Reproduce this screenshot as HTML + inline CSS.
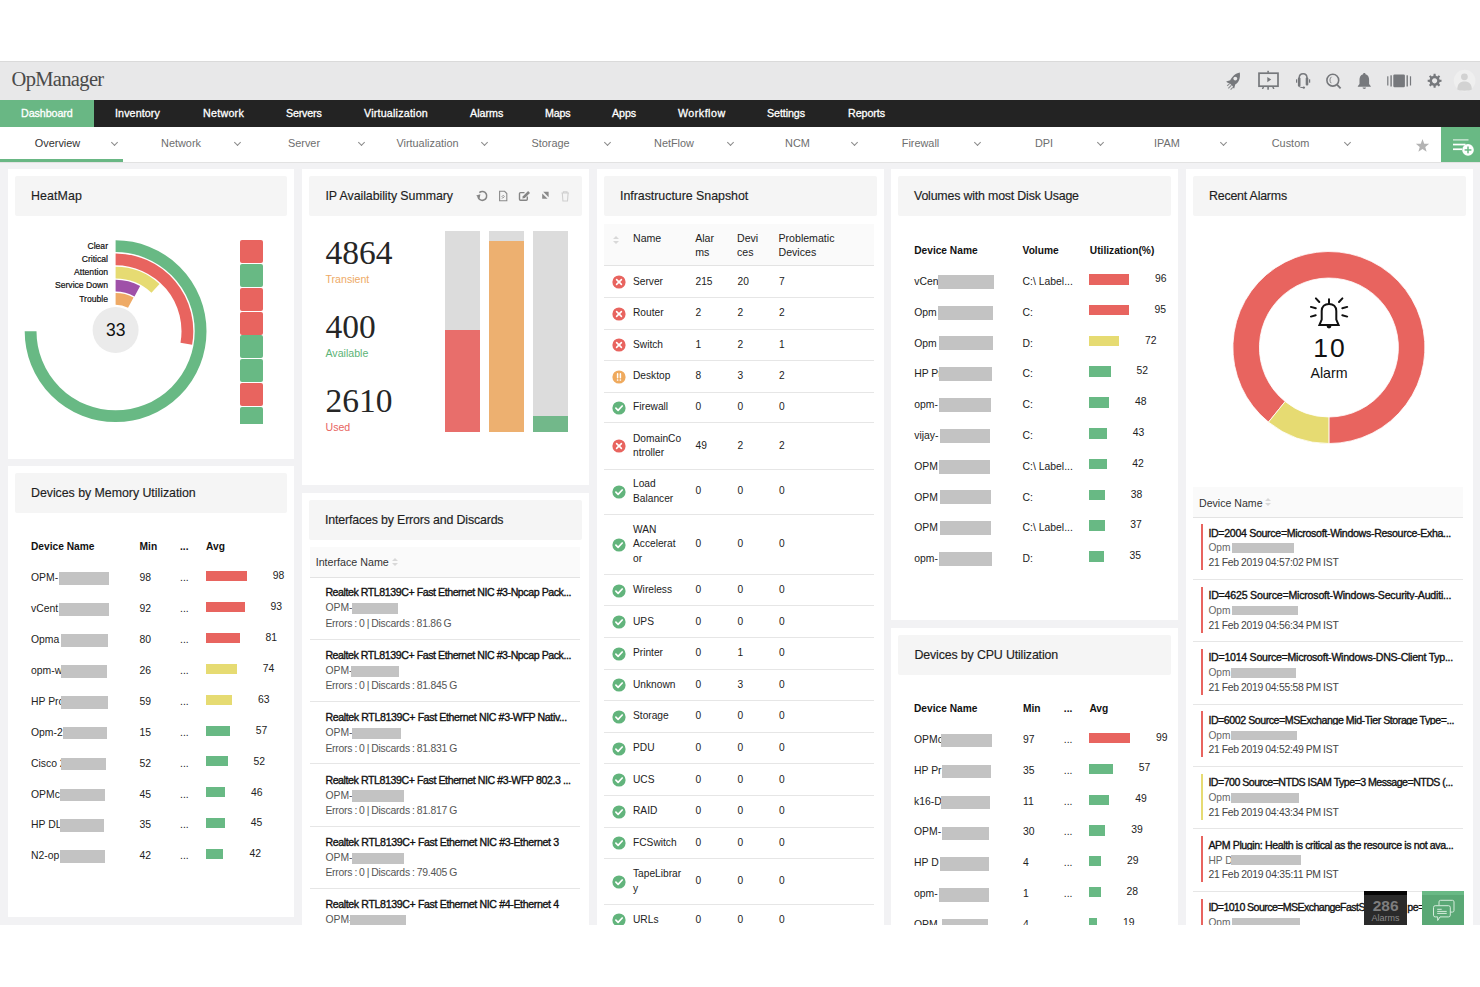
<!DOCTYPE html><html><head><meta charset="utf-8"><style>
*{margin:0;padding:0;box-sizing:border-box}
html,body{width:1480px;height:987px;overflow:hidden;background:#fff;font-family:"Liberation Sans",sans-serif;color:#222}
.a{position:absolute;white-space:nowrap}
.t{position:absolute;white-space:nowrap;line-height:1}
#hdr{position:absolute;left:0;top:61px;width:1480px;height:39px;background:#e8e8e9;border-top:1px solid #dadada}
#nav{position:absolute;left:0;top:100px;width:1480px;height:27px;background:#232323}
#sub{position:absolute;left:0;top:127px;width:1480px;height:36px;background:#fff;border-bottom:1px solid #e2e2e2}
.chev{position:absolute;width:5px;height:5px;border-right:1px solid #8a8a8a;border-bottom:1px solid #8a8a8a;transform:rotate(45deg)}
#content{position:absolute;left:0;top:163px;width:1480px;height:762px;background:#f2f2f4}
.p{position:absolute;background:#fff;overflow:hidden}
.ph{position:absolute;left:7px;top:7px;right:7px;height:40px;background:#f5f5f5;border-radius:2px}
.box{position:absolute;background:#c3c3c3}
.bar{position:absolute}
.dv{position:absolute;height:1px;background:#e6e6e6}
</style></head><body>
<div id="hdr"></div>
<div class="t f0" style="left:11.5px;top:68.9px;font-size:20.5px;color:#4a4a4a;font-weight:400;letter-spacing:-0.656px;font-family:'Liberation Serif',serif">OpManager</div>
<svg class="a" style="left:1210px;top:60px" width="270" height="40" viewBox="1210 60 270 40">
<g fill="#76787c">
<path d="M1239.8 72.4 C1235.5 73.2 1232 76.5 1230.2 80.3 L1226.2 81.6 C1227 82.8 1228.4 83.2 1229.6 83.2 L1232.8 86.3 C1232.8 87.5 1233.3 88.5 1234.2 88.6 L1235.2 84.6 C1238.7 82.5 1240.6 78.5 1239.8 72.4 Z"/>
<circle cx="1235.3" cy="78.6" r="1.9" fill="#e8e8e9"/>
<path d="M1226.8 85.5 l2.6 -2.6 l0.8 0.8 l-2.6 2.6 z M1227.9 88 l3.2 -3.2 l0.8 0.8 l-3.2 3.2 z M1230.2 89.2 l2.2 -2.2 l0.8 0.8 l-2.2 2.2 z" opacity="0.8"/>
<path d="M1267.3 77.1 L1271.2 79.6 L1267.3 82.2 Z"/>
<rect x="1267.3" y="70.8" width="1.6" height="2"/>
<rect x="1267.3" y="86.5" width="1.6" height="3.2"/>
<path d="M1262.8 86.5 l1.5 0 l-1 2.6 l-1.5 0 z M1272 86.5 l1.5 0 l1 2.6 l-1.5 0 z"/>
<rect x="1296" y="79.3" width="1.2" height="3.4"/><rect x="1297.9" y="77.6" width="2.6" height="8.8" rx="1"/><rect x="1305.7" y="77.6" width="2.6" height="8" rx="1"/>
<rect x="1309" y="79.3" width="1.2" height="3.4"/>
<circle cx="1303.8" cy="87.6" r="1.2"/>
<path d="M1364.3 73 c-0.8 0 -1.2 0.6 -1.2 1.2 c-2.6 0.7 -3.6 3 -3.6 5.6 l0 4.2 l-1.7 2.2 l0 0.6 l13 0 l0 -0.6 l-1.7 -2.2 l0 -4.2 c0 -2.6 -1 -4.9 -3.6 -5.6 c0 -0.6 -0.4 -1.2 -1.2 -1.2 z M1362.6 87.6 c0 1.1 0.8 1.4 1.7 1.4 c0.9 0 1.7 -0.3 1.7 -1.4 z"/>
<rect x="1393.3" y="74.6" width="11.6" height="12.6" rx="1.2"/>
<rect x="1387.2" y="76.3" width="1.2" height="9.2"/>
<rect x="1390.4" y="75.3" width="1.4" height="11.2"/>
<rect x="1406.5" y="75.3" width="1.4" height="11.2"/>
<rect x="1409.9" y="76.3" width="1.2" height="9.2"/>
</g>
<g fill="none" stroke="#76787c">
<rect x="1259" y="73.2" width="19" height="13" stroke-width="1.7"/>
<path d="M1299.2 80 L1299.2 78 C1299.2 75 1301 73.7 1303.1 73.7 C1305.2 73.7 1307 75 1307 78 L1307 80" stroke-width="1.5"/>
<path d="M1298.7 86 C1299.5 87.4 1301.5 87.6 1303.5 87.6" stroke-width="1"/>
<circle cx="1332.8" cy="80.2" r="5.9" stroke-width="1.6"/>
<path d="M1337 84.6 L1340.6 88.3" stroke-width="1.8"/>
<path d="M1331.5 76.8 C1329.6 78 1329.4 81.6 1331.2 83.2" stroke-width="0.9"/>
</g>
<g transform="translate(1434.6 80.8)" fill="#76787c"><path d="M-1.17 -5.07 L-0.97 -6.93 L0.97 -6.93 L1.17 -5.07 L2.76 -4.41 L4.21 -5.59 L5.59 -4.21 L4.41 -2.76 L5.07 -1.17 L6.93 -0.97 L6.93 0.97 L5.07 1.17 L4.41 2.76 L5.59 4.21 L4.21 5.59 L2.76 4.41 L1.17 5.07 L0.97 6.93 L-0.97 6.93 L-1.17 5.07 L-2.76 4.41 L-4.21 5.59 L-5.59 4.21 L-4.41 2.76 L-5.07 1.17 L-6.93 0.97 L-6.93 -0.97 L-5.07 -1.17 L-4.41 -2.76 L-5.59 -4.21 L-4.21 -5.59 L-2.76 -4.41 Z M0 -2.6 A2.6 2.6 0 1 0 0.01 -2.6 Z" fill-rule="evenodd"/></g>
<circle cx="1464.6" cy="80.6" r="10.8" fill="#efefef"/>
<circle cx="1464.4" cy="76.8" r="3.4" fill="#d2d2d2"/>
<path d="M1457.3 89.6 C1457.3 84 1460 81.6 1464.5 81.6 C1469 81.6 1471.8 84 1471.8 89.6 C1469.5 91.2 1459.6 91.2 1457.3 89.6 Z" fill="#d2d2d2"/>
</svg>
<div id="nav"></div>
<div class="a" style="left:0.0px;top:100.0px;width:94.0px;height:27.0px;background:#69b784;"></div>
<div class="t f1" style="left:21.0px;top:107.9px;font-size:10.7px;color:#fff;font-weight:400;letter-spacing:-0.076px;-webkit-text-stroke:0.3px #fff">Dashboard</div>
<div class="t f2" style="left:115.0px;top:107.9px;font-size:10.7px;color:#fff;font-weight:400;letter-spacing:0.115px;-webkit-text-stroke:0.3px #fff">Inventory</div>
<div class="t f3" style="left:203.0px;top:107.9px;font-size:10.7px;color:#fff;font-weight:400;letter-spacing:0.257px;-webkit-text-stroke:0.3px #fff">Network</div>
<div class="t f4" style="left:286.0px;top:107.9px;font-size:10.7px;color:#fff;font-weight:400;letter-spacing:-0.176px;-webkit-text-stroke:0.3px #fff">Servers</div>
<div class="t f5" style="left:364.0px;top:107.9px;font-size:10.7px;color:#fff;font-weight:400;letter-spacing:0.214px;-webkit-text-stroke:0.3px #fff">Virtualization</div>
<div class="t f6" style="left:470.0px;top:107.9px;font-size:10.7px;color:#fff;font-weight:400;letter-spacing:0.023px;-webkit-text-stroke:0.3px #fff">Alarms</div>
<div class="t f7" style="left:545.0px;top:107.9px;font-size:10.7px;color:#fff;font-weight:400;letter-spacing:-0.160px;-webkit-text-stroke:0.3px #fff">Maps</div>
<div class="t f8" style="left:612.0px;top:107.9px;font-size:10.7px;color:#fff;font-weight:400;letter-spacing:-0.090px;-webkit-text-stroke:0.3px #fff">Apps</div>
<div class="t f9" style="left:678.0px;top:107.9px;font-size:10.7px;color:#fff;font-weight:400;letter-spacing:0.480px;-webkit-text-stroke:0.3px #fff">Workflow</div>
<div class="t f10" style="left:767.0px;top:107.9px;font-size:10.7px;color:#fff;font-weight:400;letter-spacing:-0.078px;-webkit-text-stroke:0.3px #fff">Settings</div>
<div class="t f11" style="left:848.0px;top:107.9px;font-size:10.7px;color:#fff;font-weight:400;letter-spacing:-0.047px;-webkit-text-stroke:0.3px #fff">Reports</div>
<div id="sub"></div>
<div class="a" style="left:0.0px;top:159.0px;width:123.0px;height:3.0px;background:#69b784;"></div>
<div class="t" style="left:-2.5px;width:120px;text-align:center;top:137.7px;font-size:10.9px;color:#333">Overview</div>
<div class="chev" style="left:112.0px;top:139.5px"></div>
<div class="t" style="left:121px;width:120px;text-align:center;top:137.7px;font-size:10.9px;color:#6e6e6e">Network</div>
<div class="chev" style="left:235.2px;top:139.5px"></div>
<div class="t" style="left:244px;width:120px;text-align:center;top:137.7px;font-size:10.9px;color:#6e6e6e">Server</div>
<div class="chev" style="left:358.5px;top:139.5px"></div>
<div class="t" style="left:367.5px;width:120px;text-align:center;top:137.7px;font-size:10.9px;color:#6e6e6e">Virtualization</div>
<div class="chev" style="left:481.8px;top:139.5px"></div>
<div class="t" style="left:490.5px;width:120px;text-align:center;top:137.7px;font-size:10.9px;color:#6e6e6e">Storage</div>
<div class="chev" style="left:605.0px;top:139.5px"></div>
<div class="t" style="left:614px;width:120px;text-align:center;top:137.7px;font-size:10.9px;color:#6e6e6e">NetFlow</div>
<div class="chev" style="left:728.2px;top:139.5px"></div>
<div class="t" style="left:737.5px;width:120px;text-align:center;top:137.7px;font-size:10.9px;color:#6e6e6e">NCM</div>
<div class="chev" style="left:851.5px;top:139.5px"></div>
<div class="t" style="left:860.5px;width:120px;text-align:center;top:137.7px;font-size:10.9px;color:#6e6e6e">Firewall</div>
<div class="chev" style="left:974.8px;top:139.5px"></div>
<div class="t" style="left:984px;width:120px;text-align:center;top:137.7px;font-size:10.9px;color:#6e6e6e">DPI</div>
<div class="chev" style="left:1098.0px;top:139.5px"></div>
<div class="t" style="left:1107px;width:120px;text-align:center;top:137.7px;font-size:10.9px;color:#6e6e6e">IPAM</div>
<div class="chev" style="left:1221.2px;top:139.5px"></div>
<div class="t" style="left:1230.5px;width:120px;text-align:center;top:137.7px;font-size:10.9px;color:#6e6e6e">Custom</div>
<div class="chev" style="left:1344.5px;top:139.5px"></div>
<svg class="a" style="left:1413.7px;top:137.5px" width="17" height="16" viewBox="-8.5 -8 17 16"><path fill="#b3b3b3" d="M0.00 -7.00 L1.70 -2.35 L6.66 -2.16 L2.76 0.90 L4.11 5.66 L0.00 2.90 L-4.11 5.66 L-2.76 0.90 L-6.66 -2.16 L-1.70 -2.35 Z"/></svg>
<div class="a" style="left:1441.0px;top:127.0px;width:39.0px;height:35.0px;background:#69b984;"></div>
<svg class="a" style="left:1441px;top:127px" width="39" height="35" viewBox="1441 127 39 35">
<rect x="1453" y="139" width="15.5" height="1.7" fill="#fff" opacity="0.55"/>
<rect x="1453" y="143.7" width="12.5" height="1.7" fill="#fff"/>
<rect x="1453" y="148.4" width="9" height="1.7" fill="#fff"/>
<circle cx="1468" cy="149.9" r="5.8" fill="#fff"/>
<rect x="1464.6" y="149.2" width="6.8" height="1.5" fill="#69b984"/>
<rect x="1467.25" y="146.5" width="1.5" height="6.8" fill="#69b984"/>
</svg>
<div id="content"></div>
<div class="p" style="left:8px;top:169px;width:286px;height:290px"><div class="ph"></div></div>
<div class="t f12" style="left:31.0px;top:189.8px;font-size:12.4px;color:#1e1e1e;font-weight:400;letter-spacing:0.103px;-webkit-text-stroke:0.15px #1e1e1e">HeatMap</div>
<svg class="a" style="left:0;top:0" width="300" height="470"><path d="M115.60 246.20 A85 85 0 1 1 30.60 331.20" fill="none" stroke="#68b984" stroke-width="11.8"/><path d="M115.60 259.40 A71.8 71.8 0 0 1 186.31 343.67" fill="none" stroke="#e8645f" stroke-width="11.8"/><path d="M115.60 272.70 A58.5 58.5 0 0 1 155.50 288.42" fill="none" stroke="#e6db72" stroke-width="11.8"/><path d="M115.60 285.70 A45.5 45.5 0 0 1 137.31 291.21" fill="none" stroke="#9f51a8" stroke-width="11.8"/><path d="M115.60 298.80 A32.4 32.4 0 0 1 130.81 302.59" fill="none" stroke="#eeaa66" stroke-width="11.8"/><circle cx="115.6" cy="330" r="23" fill="#ebebeb"/></svg>
<div class="t" style="left:106.0px;top:321.9px;font-size:17.5px;color:#111;font-weight:400;">33</div>
<div class="t" style="left:28px;width:80px;text-align:right;top:241.5px;font-size:8.6px;color:#111;-webkit-text-stroke:0.2px #111">Clear</div>
<div class="t" style="left:28px;width:80px;text-align:right;top:254.8px;font-size:8.6px;color:#111;-webkit-text-stroke:0.2px #111">Critical</div>
<div class="t" style="left:28px;width:80px;text-align:right;top:268.1px;font-size:8.6px;color:#111;-webkit-text-stroke:0.2px #111">Attention</div>
<div class="t" style="left:28px;width:80px;text-align:right;top:281.4px;font-size:8.6px;color:#111;-webkit-text-stroke:0.2px #111">Service Down</div>
<div class="t" style="left:28px;width:80px;text-align:right;top:294.7px;font-size:8.6px;color:#111;-webkit-text-stroke:0.2px #111">Trouble</div>
<div class="a" style="left:239.8px;top:239.9px;width:23.0px;height:23.0px;background:#e8645f;border-radius:2px"></div>
<div class="a" style="left:239.8px;top:263.8px;width:23.0px;height:23.0px;background:#68b984;border-radius:2px"></div>
<div class="a" style="left:239.8px;top:287.6px;width:23.0px;height:23.0px;background:#e8645f;border-radius:2px"></div>
<div class="a" style="left:239.8px;top:311.5px;width:23.0px;height:23.0px;background:#e8645f;border-radius:2px"></div>
<div class="a" style="left:239.8px;top:335.3px;width:23.0px;height:23.0px;background:#68b984;border-radius:2px"></div>
<div class="a" style="left:239.8px;top:359.2px;width:23.0px;height:23.0px;background:#68b984;border-radius:2px"></div>
<div class="a" style="left:239.8px;top:383.1px;width:23.0px;height:23.0px;background:#e8645f;border-radius:2px"></div>
<div class="a" style="left:239.8px;top:406.9px;width:23.0px;height:17.1px;background:#68b984;border-radius:2px 2px 0 0"></div>
<div class="p" style="left:8px;top:466px;width:286px;height:451px"><div class="ph"></div></div>
<div class="t f14" style="left:31.0px;top:486.8px;font-size:12.4px;color:#1e1e1e;font-weight:400;letter-spacing:-0.043px;-webkit-text-stroke:0.15px #1e1e1e">Devices by Memory Utilization</div>
<div class="t" style="left:31.0px;top:542.3px;font-size:10.2px;color:#111;font-weight:700;">Device Name</div>
<div class="t" style="left:139.6px;top:542.3px;font-size:10.2px;color:#111;font-weight:700;">Min</div>
<div class="t" style="left:180.0px;top:542.3px;font-size:10.2px;color:#111;font-weight:700;">...</div>
<div class="t" style="left:206.0px;top:542.3px;font-size:10.2px;color:#111;font-weight:700;">Avg</div>
<div class="t" style="left:31.0px;top:573.2px;font-size:10.4px;color:#222;font-weight:400;">OPM-</div>
<div class="a" style="left:59.3px;top:572.2px;width:50.0px;height:12.8px;background:#c3c3c3;"></div>
<div class="t" style="left:139.6px;top:573.2px;font-size:10.4px;color:#222;font-weight:400;">98</div>
<div class="t" style="left:180.0px;top:573.2px;font-size:10.4px;color:#222;font-weight:400;">...</div>
<div class="a" style="left:206.0px;top:571.0px;width:40.7px;height:10.0px;background:#e8645f;"></div>
<div class="t" style="left:272.7px;top:571.2px;font-size:10.4px;color:#222;font-weight:400;">98</div>
<div class="t" style="left:31.0px;top:604.1px;font-size:10.4px;color:#222;font-weight:400;">vCent</div>
<div class="a" style="left:59.3px;top:603.1px;width:49.5px;height:12.8px;background:#c3c3c3;"></div>
<div class="t" style="left:139.6px;top:604.1px;font-size:10.4px;color:#222;font-weight:400;">92</div>
<div class="t" style="left:180.0px;top:604.1px;font-size:10.4px;color:#222;font-weight:400;">...</div>
<div class="a" style="left:206.0px;top:601.9px;width:38.6px;height:10.0px;background:#e8645f;"></div>
<div class="t" style="left:270.6px;top:602.1px;font-size:10.4px;color:#222;font-weight:400;">93</div>
<div class="t" style="left:31.0px;top:635.0px;font-size:10.4px;color:#222;font-weight:400;">Opma</div>
<div class="a" style="left:60.6px;top:634.0px;width:47.4px;height:12.8px;background:#c3c3c3;"></div>
<div class="t" style="left:139.6px;top:635.0px;font-size:10.4px;color:#222;font-weight:400;">80</div>
<div class="t" style="left:180.0px;top:635.0px;font-size:10.4px;color:#222;font-weight:400;">...</div>
<div class="a" style="left:206.0px;top:632.8px;width:33.6px;height:10.0px;background:#e8645f;"></div>
<div class="t" style="left:265.6px;top:633.0px;font-size:10.4px;color:#222;font-weight:400;">81</div>
<div class="t" style="left:31.0px;top:665.9px;font-size:10.4px;color:#222;font-weight:400;">opm-w</div>
<div class="a" style="left:61.1px;top:664.9px;width:45.6px;height:12.8px;background:#c3c3c3;"></div>
<div class="t" style="left:139.6px;top:665.9px;font-size:10.4px;color:#222;font-weight:400;">26</div>
<div class="t" style="left:180.0px;top:665.9px;font-size:10.4px;color:#222;font-weight:400;">...</div>
<div class="a" style="left:206.0px;top:663.7px;width:30.7px;height:10.0px;background:#e6db72;"></div>
<div class="t" style="left:262.7px;top:663.9px;font-size:10.4px;color:#222;font-weight:400;">74</div>
<div class="t" style="left:31.0px;top:696.8px;font-size:10.4px;color:#222;font-weight:400;">HP Pro</div>
<div class="a" style="left:60.6px;top:695.8px;width:47.4px;height:12.8px;background:#c3c3c3;"></div>
<div class="t" style="left:139.6px;top:696.8px;font-size:10.4px;color:#222;font-weight:400;">59</div>
<div class="t" style="left:180.0px;top:696.8px;font-size:10.4px;color:#222;font-weight:400;">...</div>
<div class="a" style="left:206.0px;top:694.6px;width:26.1px;height:10.0px;background:#e6db72;"></div>
<div class="t" style="left:258.1px;top:694.8px;font-size:10.4px;color:#222;font-weight:400;">63</div>
<div class="t" style="left:31.0px;top:727.7px;font-size:10.4px;color:#222;font-weight:400;">Opm-2</div>
<div class="a" style="left:62.5px;top:726.7px;width:44.2px;height:12.8px;background:#c3c3c3;"></div>
<div class="t" style="left:139.6px;top:727.7px;font-size:10.4px;color:#222;font-weight:400;">15</div>
<div class="t" style="left:180.0px;top:727.7px;font-size:10.4px;color:#222;font-weight:400;">...</div>
<div class="a" style="left:206.0px;top:725.5px;width:23.7px;height:10.0px;background:#68b984;"></div>
<div class="t" style="left:255.7px;top:725.7px;font-size:10.4px;color:#222;font-weight:400;">57</div>
<div class="t" style="left:31.0px;top:758.6px;font-size:10.4px;color:#222;font-weight:400;">Cisco 2</div>
<div class="a" style="left:61.0px;top:757.6px;width:45.0px;height:12.8px;background:#c3c3c3;"></div>
<div class="t" style="left:139.6px;top:758.6px;font-size:10.4px;color:#222;font-weight:400;">52</div>
<div class="t" style="left:180.0px;top:758.6px;font-size:10.4px;color:#222;font-weight:400;">...</div>
<div class="a" style="left:206.0px;top:756.4px;width:21.6px;height:10.0px;background:#68b984;"></div>
<div class="t" style="left:253.6px;top:756.6px;font-size:10.4px;color:#222;font-weight:400;">52</div>
<div class="t" style="left:31.0px;top:789.5px;font-size:10.4px;color:#222;font-weight:400;">OPMc</div>
<div class="a" style="left:60.2px;top:788.5px;width:44.8px;height:12.8px;background:#c3c3c3;"></div>
<div class="t" style="left:139.6px;top:789.5px;font-size:10.4px;color:#222;font-weight:400;">45</div>
<div class="t" style="left:180.0px;top:789.5px;font-size:10.4px;color:#222;font-weight:400;">...</div>
<div class="a" style="left:206.0px;top:787.3px;width:19.1px;height:10.0px;background:#68b984;"></div>
<div class="t" style="left:251.1px;top:787.5px;font-size:10.4px;color:#222;font-weight:400;">46</div>
<div class="t" style="left:31.0px;top:820.4px;font-size:10.4px;color:#222;font-weight:400;">HP DL</div>
<div class="a" style="left:60.2px;top:819.4px;width:43.6px;height:12.8px;background:#c3c3c3;"></div>
<div class="t" style="left:139.6px;top:820.4px;font-size:10.4px;color:#222;font-weight:400;">35</div>
<div class="t" style="left:180.0px;top:820.4px;font-size:10.4px;color:#222;font-weight:400;">...</div>
<div class="a" style="left:206.0px;top:818.2px;width:18.7px;height:10.0px;background:#68b984;"></div>
<div class="t" style="left:250.7px;top:818.4px;font-size:10.4px;color:#222;font-weight:400;">45</div>
<div class="t" style="left:31.0px;top:851.3px;font-size:10.4px;color:#222;font-weight:400;">N2-op</div>
<div class="a" style="left:60.2px;top:850.3px;width:45.3px;height:12.8px;background:#c3c3c3;"></div>
<div class="t" style="left:139.6px;top:851.3px;font-size:10.4px;color:#222;font-weight:400;">42</div>
<div class="t" style="left:180.0px;top:851.3px;font-size:10.4px;color:#222;font-weight:400;">...</div>
<div class="a" style="left:206.0px;top:849.1px;width:17.4px;height:10.0px;background:#68b984;"></div>
<div class="t" style="left:249.4px;top:849.3px;font-size:10.4px;color:#222;font-weight:400;">42</div>
<div class="p" style="left:302px;top:169px;width:287px;height:316px"><div class="ph"></div></div>
<div class="t f59" style="left:325.5px;top:189.8px;font-size:12.4px;color:#1e1e1e;font-weight:400;letter-spacing:-0.070px;-webkit-text-stroke:0.15px #1e1e1e">IP Availability Summary</div>
<svg class="a" style="left:470px;top:185px" width="110" height="22" viewBox="470 185 110 22">
<g fill="none" stroke="#858585" stroke-width="1.6">
<path d="M477.94 196.51 A4.4 4.4 0 1 0 479.36 192.63"/>
</g>
<path d="M476.2 195.6 L480.4 194.2 L479.6 198.4 Z" fill="#858585"/>
<g fill="none" stroke="#8a8a8a" stroke-width="1.1">
<path d="M499.6 191.3 h5 l2.2 2.2 v7.2 h-7.2 z"/>
<path d="M502 196.5 l1.2 -1.2 l1.2 1.2 l-1.2 1.2 z M502 198.6 l1.2 -1.2" stroke-width="0.9"/>
</g>
<g fill="none" stroke="#858585" stroke-width="1.4">
<path d="M524.5 192.6 h-4 a1 1 0 0 0 -1 1 v5.7 a1 1 0 0 0 1 1 h5.8 a1 1 0 0 0 1 -1 v-2.8"/>
</g>
<path d="M522.3 198.6 l0.6 -2.4 l5.2 -5.2 l1.9 1.9 l-5.2 5.2 z" fill="#858585"/>
<g fill="#8a8a8a">
<path d="M543.2 191.8 h5.4 v5.4 z"/>
<path d="M547.6 198.8 h-5.4 v-5.4 z" />
</g>
<g fill="none" stroke="#cfcfcf" stroke-width="1.1">
<path d="M561.4 193 h7.6 M563.4 193 v-1.3 h3.6 v1.3 M562.3 193 l0.6 8 h4.6 l0.6 -8"/>
</g>
</svg>
<div class="t" style="left:325.5px;top:236.0px;font-size:33.5px;color:#262626;font-weight:400;font-family:'Liberation Serif',serif">4864</div>
<div class="t" style="left:325.5px;top:273.5px;font-size:10.6px;color:#eeaa66;font-weight:400;">Transient</div>
<div class="t" style="left:325.5px;top:310.0px;font-size:33.5px;color:#262626;font-weight:400;font-family:'Liberation Serif',serif">400</div>
<div class="t" style="left:325.5px;top:347.5px;font-size:10.6px;color:#5cb376;font-weight:400;">Available</div>
<div class="t" style="left:325.5px;top:384.0px;font-size:33.5px;color:#262626;font-weight:400;font-family:'Liberation Serif',serif">2610</div>
<div class="t" style="left:325.5px;top:421.5px;font-size:10.6px;color:#e8645f;font-weight:400;">Used</div>
<div class="a" style="left:444.9px;top:231.0px;width:35.2px;height:201.0px;background:#dcdcdc;"></div>
<div class="a" style="left:444.9px;top:330.0px;width:35.2px;height:102.0px;background:#e86e6b;"></div>
<div class="a" style="left:488.8px;top:231.0px;width:35.2px;height:201.0px;background:#dcdcdc;"></div>
<div class="a" style="left:488.8px;top:240.7px;width:35.2px;height:191.3px;background:#edb070;"></div>
<div class="a" style="left:532.8px;top:231.0px;width:35.2px;height:201.0px;background:#dcdcdc;"></div>
<div class="a" style="left:532.8px;top:416.0px;width:35.2px;height:16.0px;background:#72b88a;"></div>
<div class="p" style="left:302px;top:493px;width:287px;height:432px"><div class="ph"></div></div>
<div class="t f66" style="left:325.0px;top:513.8px;font-size:12.4px;color:#1e1e1e;font-weight:400;letter-spacing:-0.166px;-webkit-text-stroke:0.15px #1e1e1e">Interfaces by Errors and Discards</div>
<div class="a" style="left:310.0px;top:547.0px;width:270.0px;height:29.6px;background:#fafafa;"></div>
<div class="t" style="left:315.7px;top:557.1px;font-size:10.7px;color:#333;font-weight:400;">Interface Name</div>
<svg class="a" style="left:391px;top:557px" width="8" height="10" viewBox="0 0 8 10"><path d="M1 4 L4 1 L7 4 Z M1 6 L4 9 L7 6 Z" fill="#d8d8d8"/></svg>
<div class="a" style="left:310.0px;top:576.6px;width:270.0px;height:1.0px;background:#e3e3e3;"></div>
<div class="a" style="left:302px;top:577px;width:287px;height:348px;overflow:hidden">
</div>
<div class="t f68" style="left:325.4px;top:587.4px;font-size:10.6px;color:#111;font-weight:400;letter-spacing:-0.431px;;-webkit-text-stroke:0.35px #111">Realtek RTL8139C+ Fast Ethernet NIC #3-Npcap Pack...</div>
<div class="t" style="left:325.4px;top:603.4px;font-size:10.4px;color:#555;font-weight:400;">OPM-</div>
<div class="a" style="left:352.0px;top:603.1px;width:46.0px;height:11.3px;background:#c3c3c3;"></div>
<div class="t f70" style="left:325.4px;top:618.7px;font-size:10.4px;color:#555;font-weight:400;letter-spacing:-0.228px;;word-spacing:-0.6px">Errors : 0 | Discards : 81.86 G</div>
<div class="a" style="left:310.0px;top:638.6px;width:270.0px;height:1.0px;background:#e6e6e6;"></div>
<div class="t f71" style="left:325.4px;top:649.8px;font-size:10.6px;color:#111;font-weight:400;letter-spacing:-0.431px;;-webkit-text-stroke:0.35px #111">Realtek RTL8139C+ Fast Ethernet NIC #3-Npcap Pack...</div>
<div class="t" style="left:325.4px;top:665.8px;font-size:10.4px;color:#555;font-weight:400;">OPM-</div>
<div class="a" style="left:351.0px;top:665.5px;width:47.9px;height:11.3px;background:#c3c3c3;"></div>
<div class="t f73" style="left:325.4px;top:681.1px;font-size:10.4px;color:#555;font-weight:400;letter-spacing:-0.226px;;word-spacing:-0.6px">Errors : 0 | Discards : 81.845 G</div>
<div class="a" style="left:310.0px;top:701.0px;width:270.0px;height:1.0px;background:#e6e6e6;"></div>
<div class="t f74" style="left:325.4px;top:712.2px;font-size:10.6px;color:#111;font-weight:400;letter-spacing:-0.376px;;-webkit-text-stroke:0.35px #111">Realtek RTL8139C+ Fast Ethernet NIC #3-WFP Nativ...</div>
<div class="t" style="left:325.4px;top:728.2px;font-size:10.4px;color:#555;font-weight:400;">OPM-</div>
<div class="a" style="left:351.7px;top:727.9px;width:49.3px;height:11.3px;background:#c3c3c3;"></div>
<div class="t f76" style="left:325.4px;top:743.5px;font-size:10.4px;color:#555;font-weight:400;letter-spacing:-0.226px;;word-spacing:-0.6px">Errors : 0 | Discards : 81.831 G</div>
<div class="a" style="left:310.0px;top:763.4px;width:270.0px;height:1.0px;background:#e6e6e6;"></div>
<div class="t f77" style="left:325.4px;top:774.6px;font-size:10.6px;color:#111;font-weight:400;letter-spacing:-0.413px;;-webkit-text-stroke:0.35px #111">Realtek RTL8139C+ Fast Ethernet NIC #3-WFP 802.3 ...</div>
<div class="t" style="left:325.4px;top:790.6px;font-size:10.4px;color:#555;font-weight:400;">OPM-</div>
<div class="a" style="left:351.7px;top:790.3px;width:52.3px;height:11.3px;background:#c3c3c3;"></div>
<div class="t f79" style="left:325.4px;top:805.9px;font-size:10.4px;color:#555;font-weight:400;letter-spacing:-0.226px;;word-spacing:-0.6px">Errors : 0 | Discards : 81.817 G</div>
<div class="a" style="left:310.0px;top:825.8px;width:270.0px;height:1.0px;background:#e6e6e6;"></div>
<div class="t f80" style="left:325.4px;top:837.0px;font-size:10.6px;color:#111;font-weight:400;letter-spacing:-0.360px;;-webkit-text-stroke:0.35px #111">Realtek RTL8139C+ Fast Ethernet NIC #3-Ethernet 3</div>
<div class="t" style="left:325.4px;top:853.0px;font-size:10.4px;color:#555;font-weight:400;">OPM-</div>
<div class="a" style="left:351.7px;top:852.7px;width:52.3px;height:11.3px;background:#c3c3c3;"></div>
<div class="t f82" style="left:325.4px;top:868.3px;font-size:10.4px;color:#555;font-weight:400;letter-spacing:-0.226px;;word-spacing:-0.6px">Errors : 0 | Discards : 79.405 G</div>
<div class="a" style="left:310.0px;top:888.2px;width:270.0px;height:1.0px;background:#e6e6e6;"></div>
<div class="t f83" style="left:325.4px;top:899.4px;font-size:10.6px;color:#111;font-weight:400;letter-spacing:-0.360px;;-webkit-text-stroke:0.35px #111">Realtek RTL8139C+ Fast Ethernet NIC #4-Ethernet 4</div>
<div class="t" style="left:325.4px;top:915.4px;font-size:10.4px;color:#555;font-weight:400;">OPM-</div>
<div class="a" style="left:350.2px;top:915.1px;width:56.1px;height:9.9px;background:#c3c3c3;"></div>
<div class="p" style="left:597px;top:169px;width:287px;height:756px"><div class="ph"></div></div>
<div class="t f85" style="left:620.0px;top:189.8px;font-size:12.4px;color:#1e1e1e;font-weight:400;letter-spacing:-0.026px;-webkit-text-stroke:0.15px #1e1e1e">Infrastructure Snapshot</div>
<div class="a" style="left:604.0px;top:223.5px;width:270.0px;height:41.7px;background:#fafafa;"></div>
<svg class="a" style="left:612px;top:235px" width="8" height="10" viewBox="0 0 8 10"><path d="M1 4 L4 1 L7 4 Z M1 6 L4 9 L7 6 Z" fill="#d8d8d8"/></svg>
<div class="a" style="left:604.0px;top:265.2px;width:270.0px;height:1.0px;background:#e3e3e3;"></div>
<div class="t" style="left:633.0px;top:233.3px;font-size:10.6px;color:#222;font-weight:400;">Name</div>
<div class="t" style="left:695.2px;top:233.3px;font-size:10.6px;color:#222;font-weight:400;">Alar</div>
<div class="t" style="left:695.2px;top:246.8px;font-size:10.6px;color:#222;font-weight:400;">ms</div>
<div class="t" style="left:737.0px;top:233.3px;font-size:10.6px;color:#222;font-weight:400;">Devi</div>
<div class="t" style="left:737.0px;top:246.8px;font-size:10.6px;color:#222;font-weight:400;">ces</div>
<div class="t" style="left:778.5px;top:233.3px;font-size:10.6px;color:#222;font-weight:400;">Problematic</div>
<div class="t" style="left:778.5px;top:246.8px;font-size:10.6px;color:#222;font-weight:400;">Devices</div>
<svg class="a" style="left:611.8px;top:275.1px" width="14" height="14" viewBox="0 0 14 14"><circle cx="7" cy="7" r="6.6" fill="#e8645f"/><path d="M4.6 4.6 L9.4 9.4 M9.4 4.6 L4.6 9.4" stroke="#fff" stroke-width="1.6" stroke-linecap="round"/></svg>
<div class="t" style="left:633.0px;top:276.7px;font-size:10.2px;color:#222;font-weight:400;">Server</div>
<div class="t" style="left:695.5px;top:276.7px;font-size:10.2px;color:#222;font-weight:400;">215</div>
<div class="t" style="left:737.5px;top:276.7px;font-size:10.2px;color:#222;font-weight:400;">20</div>
<div class="t" style="left:779.0px;top:276.7px;font-size:10.2px;color:#222;font-weight:400;">7</div>
<div class="a" style="left:604.0px;top:297.3px;width:270.0px;height:1.0px;background:#e6e6e6;"></div>
<svg class="a" style="left:611.8px;top:306.9px" width="14" height="14" viewBox="0 0 14 14"><circle cx="7" cy="7" r="6.6" fill="#e8645f"/><path d="M4.6 4.6 L9.4 9.4 M9.4 4.6 L4.6 9.4" stroke="#fff" stroke-width="1.6" stroke-linecap="round"/></svg>
<div class="t" style="left:633.0px;top:308.4px;font-size:10.2px;color:#222;font-weight:400;">Router</div>
<div class="t" style="left:695.5px;top:308.4px;font-size:10.2px;color:#222;font-weight:400;">2</div>
<div class="t" style="left:737.5px;top:308.4px;font-size:10.2px;color:#222;font-weight:400;">2</div>
<div class="t" style="left:779.0px;top:308.4px;font-size:10.2px;color:#222;font-weight:400;">2</div>
<div class="a" style="left:604.0px;top:328.7px;width:270.0px;height:1.0px;background:#e6e6e6;"></div>
<svg class="a" style="left:611.8px;top:338.4px" width="14" height="14" viewBox="0 0 14 14"><circle cx="7" cy="7" r="6.6" fill="#e8645f"/><path d="M4.6 4.6 L9.4 9.4 M9.4 4.6 L4.6 9.4" stroke="#fff" stroke-width="1.6" stroke-linecap="round"/></svg>
<div class="t" style="left:633.0px;top:340.0px;font-size:10.2px;color:#222;font-weight:400;">Switch</div>
<div class="t" style="left:695.5px;top:340.0px;font-size:10.2px;color:#222;font-weight:400;">1</div>
<div class="t" style="left:737.5px;top:340.0px;font-size:10.2px;color:#222;font-weight:400;">2</div>
<div class="t" style="left:779.0px;top:340.0px;font-size:10.2px;color:#222;font-weight:400;">1</div>
<div class="a" style="left:604.0px;top:360.4px;width:270.0px;height:1.0px;background:#e6e6e6;"></div>
<svg class="a" style="left:611.8px;top:369.8px" width="14" height="14" viewBox="0 0 14 14"><circle cx="7" cy="7" r="6.6" fill="#efaa5e"/><path d="M5.6 3.8 L5.6 7.8 M8.4 3.8 L8.4 7.8" stroke="#fff" stroke-width="1.5" stroke-linecap="round"/><circle cx="5.6" cy="10" r="0.85" fill="#fff"/><circle cx="8.4" cy="10" r="0.85" fill="#fff"/></svg>
<div class="t" style="left:633.0px;top:371.4px;font-size:10.2px;color:#222;font-weight:400;">Desktop</div>
<div class="t" style="left:695.5px;top:371.4px;font-size:10.2px;color:#222;font-weight:400;">8</div>
<div class="t" style="left:737.5px;top:371.4px;font-size:10.2px;color:#222;font-weight:400;">3</div>
<div class="t" style="left:779.0px;top:371.4px;font-size:10.2px;color:#222;font-weight:400;">2</div>
<div class="a" style="left:604.0px;top:391.5px;width:270.0px;height:1.0px;background:#e6e6e6;"></div>
<svg class="a" style="left:611.8px;top:400.8px" width="14" height="14" viewBox="0 0 14 14"><circle cx="7" cy="7" r="6.6" fill="#62b47c"/><path d="M3.9 7.2 L6.1 9.3 L10.2 5" stroke="#fff" stroke-width="1.7" fill="none" stroke-linecap="round" stroke-linejoin="round"/></svg>
<div class="t" style="left:633.0px;top:402.3px;font-size:10.2px;color:#222;font-weight:400;">Firewall</div>
<div class="t" style="left:695.5px;top:402.3px;font-size:10.2px;color:#222;font-weight:400;">0</div>
<div class="t" style="left:737.5px;top:402.3px;font-size:10.2px;color:#222;font-weight:400;">0</div>
<div class="t" style="left:779.0px;top:402.3px;font-size:10.2px;color:#222;font-weight:400;">0</div>
<div class="a" style="left:604.0px;top:422.3px;width:270.0px;height:1.0px;background:#e6e6e6;"></div>
<svg class="a" style="left:611.8px;top:439.3px" width="14" height="14" viewBox="0 0 14 14"><circle cx="7" cy="7" r="6.6" fill="#e8645f"/><path d="M4.6 4.6 L9.4 9.4 M9.4 4.6 L4.6 9.4" stroke="#fff" stroke-width="1.6" stroke-linecap="round"/></svg>
<div class="t" style="left:633.0px;top:433.6px;font-size:10.2px;color:#222;font-weight:400;">DomainCo</div>
<div class="t" style="left:633.0px;top:448.0px;font-size:10.2px;color:#222;font-weight:400;">ntroller</div>
<div class="t" style="left:695.5px;top:440.8px;font-size:10.2px;color:#222;font-weight:400;">49</div>
<div class="t" style="left:737.5px;top:440.8px;font-size:10.2px;color:#222;font-weight:400;">2</div>
<div class="t" style="left:779.0px;top:440.8px;font-size:10.2px;color:#222;font-weight:400;">2</div>
<div class="a" style="left:604.0px;top:468.5px;width:270.0px;height:1.0px;background:#e6e6e6;"></div>
<svg class="a" style="left:611.8px;top:484.9px" width="14" height="14" viewBox="0 0 14 14"><circle cx="7" cy="7" r="6.6" fill="#62b47c"/><path d="M3.9 7.2 L6.1 9.3 L10.2 5" stroke="#fff" stroke-width="1.7" fill="none" stroke-linecap="round" stroke-linejoin="round"/></svg>
<div class="t" style="left:633.0px;top:479.2px;font-size:10.2px;color:#222;font-weight:400;">Load</div>
<div class="t" style="left:633.0px;top:493.6px;font-size:10.2px;color:#222;font-weight:400;">Balancer</div>
<div class="t" style="left:695.5px;top:486.4px;font-size:10.2px;color:#222;font-weight:400;">0</div>
<div class="t" style="left:737.5px;top:486.4px;font-size:10.2px;color:#222;font-weight:400;">0</div>
<div class="t" style="left:779.0px;top:486.4px;font-size:10.2px;color:#222;font-weight:400;">0</div>
<div class="a" style="left:604.0px;top:513.5px;width:270.0px;height:1.0px;background:#e6e6e6;"></div>
<svg class="a" style="left:611.8px;top:537.5px" width="14" height="14" viewBox="0 0 14 14"><circle cx="7" cy="7" r="6.6" fill="#62b47c"/><path d="M3.9 7.2 L6.1 9.3 L10.2 5" stroke="#fff" stroke-width="1.7" fill="none" stroke-linecap="round" stroke-linejoin="round"/></svg>
<div class="t" style="left:633.0px;top:524.7px;font-size:10.2px;color:#222;font-weight:400;">WAN</div>
<div class="t" style="left:633.0px;top:539.1px;font-size:10.2px;color:#222;font-weight:400;">Accelerat</div>
<div class="t" style="left:633.0px;top:553.5px;font-size:10.2px;color:#222;font-weight:400;">or</div>
<div class="t" style="left:695.5px;top:539.1px;font-size:10.2px;color:#222;font-weight:400;">0</div>
<div class="t" style="left:737.5px;top:539.1px;font-size:10.2px;color:#222;font-weight:400;">0</div>
<div class="t" style="left:779.0px;top:539.1px;font-size:10.2px;color:#222;font-weight:400;">0</div>
<div class="a" style="left:604.0px;top:573.8px;width:270.0px;height:1.0px;background:#e6e6e6;"></div>
<svg class="a" style="left:611.8px;top:583.5px" width="14" height="14" viewBox="0 0 14 14"><circle cx="7" cy="7" r="6.6" fill="#62b47c"/><path d="M3.9 7.2 L6.1 9.3 L10.2 5" stroke="#fff" stroke-width="1.7" fill="none" stroke-linecap="round" stroke-linejoin="round"/></svg>
<div class="t" style="left:633.0px;top:585.0px;font-size:10.2px;color:#222;font-weight:400;">Wireless</div>
<div class="t" style="left:695.5px;top:585.0px;font-size:10.2px;color:#222;font-weight:400;">0</div>
<div class="t" style="left:737.5px;top:585.0px;font-size:10.2px;color:#222;font-weight:400;">0</div>
<div class="t" style="left:779.0px;top:585.0px;font-size:10.2px;color:#222;font-weight:400;">0</div>
<div class="a" style="left:604.0px;top:605.4px;width:270.0px;height:1.0px;background:#e6e6e6;"></div>
<svg class="a" style="left:611.8px;top:615.2px" width="14" height="14" viewBox="0 0 14 14"><circle cx="7" cy="7" r="6.6" fill="#62b47c"/><path d="M3.9 7.2 L6.1 9.3 L10.2 5" stroke="#fff" stroke-width="1.7" fill="none" stroke-linecap="round" stroke-linejoin="round"/></svg>
<div class="t" style="left:633.0px;top:616.7px;font-size:10.2px;color:#222;font-weight:400;">UPS</div>
<div class="t" style="left:695.5px;top:616.7px;font-size:10.2px;color:#222;font-weight:400;">0</div>
<div class="t" style="left:737.5px;top:616.7px;font-size:10.2px;color:#222;font-weight:400;">0</div>
<div class="t" style="left:779.0px;top:616.7px;font-size:10.2px;color:#222;font-weight:400;">0</div>
<div class="a" style="left:604.0px;top:637.2px;width:270.0px;height:1.0px;background:#e6e6e6;"></div>
<svg class="a" style="left:611.8px;top:646.8px" width="14" height="14" viewBox="0 0 14 14"><circle cx="7" cy="7" r="6.6" fill="#62b47c"/><path d="M3.9 7.2 L6.1 9.3 L10.2 5" stroke="#fff" stroke-width="1.7" fill="none" stroke-linecap="round" stroke-linejoin="round"/></svg>
<div class="t" style="left:633.0px;top:648.3px;font-size:10.2px;color:#222;font-weight:400;">Printer</div>
<div class="t" style="left:695.5px;top:648.3px;font-size:10.2px;color:#222;font-weight:400;">0</div>
<div class="t" style="left:737.5px;top:648.3px;font-size:10.2px;color:#222;font-weight:400;">1</div>
<div class="t" style="left:779.0px;top:648.3px;font-size:10.2px;color:#222;font-weight:400;">0</div>
<div class="a" style="left:604.0px;top:668.6px;width:270.0px;height:1.0px;background:#e6e6e6;"></div>
<svg class="a" style="left:611.8px;top:678.2px" width="14" height="14" viewBox="0 0 14 14"><circle cx="7" cy="7" r="6.6" fill="#62b47c"/><path d="M3.9 7.2 L6.1 9.3 L10.2 5" stroke="#fff" stroke-width="1.7" fill="none" stroke-linecap="round" stroke-linejoin="round"/></svg>
<div class="t" style="left:633.0px;top:679.7px;font-size:10.2px;color:#222;font-weight:400;">Unknown</div>
<div class="t" style="left:695.5px;top:679.7px;font-size:10.2px;color:#222;font-weight:400;">0</div>
<div class="t" style="left:737.5px;top:679.7px;font-size:10.2px;color:#222;font-weight:400;">3</div>
<div class="t" style="left:779.0px;top:679.7px;font-size:10.2px;color:#222;font-weight:400;">0</div>
<div class="a" style="left:604.0px;top:700.0px;width:270.0px;height:1.0px;background:#e6e6e6;"></div>
<svg class="a" style="left:611.8px;top:709.9px" width="14" height="14" viewBox="0 0 14 14"><circle cx="7" cy="7" r="6.6" fill="#62b47c"/><path d="M3.9 7.2 L6.1 9.3 L10.2 5" stroke="#fff" stroke-width="1.7" fill="none" stroke-linecap="round" stroke-linejoin="round"/></svg>
<div class="t" style="left:633.0px;top:711.4px;font-size:10.2px;color:#222;font-weight:400;">Storage</div>
<div class="t" style="left:695.5px;top:711.4px;font-size:10.2px;color:#222;font-weight:400;">0</div>
<div class="t" style="left:737.5px;top:711.4px;font-size:10.2px;color:#222;font-weight:400;">0</div>
<div class="t" style="left:779.0px;top:711.4px;font-size:10.2px;color:#222;font-weight:400;">0</div>
<div class="a" style="left:604.0px;top:732.0px;width:270.0px;height:1.0px;background:#e6e6e6;"></div>
<svg class="a" style="left:611.8px;top:741.6px" width="14" height="14" viewBox="0 0 14 14"><circle cx="7" cy="7" r="6.6" fill="#62b47c"/><path d="M3.9 7.2 L6.1 9.3 L10.2 5" stroke="#fff" stroke-width="1.7" fill="none" stroke-linecap="round" stroke-linejoin="round"/></svg>
<div class="t" style="left:633.0px;top:743.1px;font-size:10.2px;color:#222;font-weight:400;">PDU</div>
<div class="t" style="left:695.5px;top:743.1px;font-size:10.2px;color:#222;font-weight:400;">0</div>
<div class="t" style="left:737.5px;top:743.1px;font-size:10.2px;color:#222;font-weight:400;">0</div>
<div class="t" style="left:779.0px;top:743.1px;font-size:10.2px;color:#222;font-weight:400;">0</div>
<div class="a" style="left:604.0px;top:763.4px;width:270.0px;height:1.0px;background:#e6e6e6;"></div>
<svg class="a" style="left:611.8px;top:773.2px" width="14" height="14" viewBox="0 0 14 14"><circle cx="7" cy="7" r="6.6" fill="#62b47c"/><path d="M3.9 7.2 L6.1 9.3 L10.2 5" stroke="#fff" stroke-width="1.7" fill="none" stroke-linecap="round" stroke-linejoin="round"/></svg>
<div class="t" style="left:633.0px;top:774.8px;font-size:10.2px;color:#222;font-weight:400;">UCS</div>
<div class="t" style="left:695.5px;top:774.8px;font-size:10.2px;color:#222;font-weight:400;">0</div>
<div class="t" style="left:737.5px;top:774.8px;font-size:10.2px;color:#222;font-weight:400;">0</div>
<div class="t" style="left:779.0px;top:774.8px;font-size:10.2px;color:#222;font-weight:400;">0</div>
<div class="a" style="left:604.0px;top:795.3px;width:270.0px;height:1.0px;background:#e6e6e6;"></div>
<svg class="a" style="left:611.8px;top:804.9px" width="14" height="14" viewBox="0 0 14 14"><circle cx="7" cy="7" r="6.6" fill="#62b47c"/><path d="M3.9 7.2 L6.1 9.3 L10.2 5" stroke="#fff" stroke-width="1.7" fill="none" stroke-linecap="round" stroke-linejoin="round"/></svg>
<div class="t" style="left:633.0px;top:806.4px;font-size:10.2px;color:#222;font-weight:400;">RAID</div>
<div class="t" style="left:695.5px;top:806.4px;font-size:10.2px;color:#222;font-weight:400;">0</div>
<div class="t" style="left:737.5px;top:806.4px;font-size:10.2px;color:#222;font-weight:400;">0</div>
<div class="t" style="left:779.0px;top:806.4px;font-size:10.2px;color:#222;font-weight:400;">0</div>
<div class="a" style="left:604.0px;top:826.7px;width:270.0px;height:1.0px;background:#e6e6e6;"></div>
<svg class="a" style="left:611.8px;top:836.4px" width="14" height="14" viewBox="0 0 14 14"><circle cx="7" cy="7" r="6.6" fill="#62b47c"/><path d="M3.9 7.2 L6.1 9.3 L10.2 5" stroke="#fff" stroke-width="1.7" fill="none" stroke-linecap="round" stroke-linejoin="round"/></svg>
<div class="t" style="left:633.0px;top:838.0px;font-size:10.2px;color:#222;font-weight:400;">FCSwitch</div>
<div class="t" style="left:695.5px;top:838.0px;font-size:10.2px;color:#222;font-weight:400;">0</div>
<div class="t" style="left:737.5px;top:838.0px;font-size:10.2px;color:#222;font-weight:400;">0</div>
<div class="t" style="left:779.0px;top:838.0px;font-size:10.2px;color:#222;font-weight:400;">0</div>
<div class="a" style="left:604.0px;top:858.4px;width:270.0px;height:1.0px;background:#e6e6e6;"></div>
<svg class="a" style="left:611.8px;top:874.9px" width="14" height="14" viewBox="0 0 14 14"><circle cx="7" cy="7" r="6.6" fill="#62b47c"/><path d="M3.9 7.2 L6.1 9.3 L10.2 5" stroke="#fff" stroke-width="1.7" fill="none" stroke-linecap="round" stroke-linejoin="round"/></svg>
<div class="t" style="left:633.0px;top:869.2px;font-size:10.2px;color:#222;font-weight:400;">TapeLibrar</div>
<div class="t" style="left:633.0px;top:883.6px;font-size:10.2px;color:#222;font-weight:400;">y</div>
<div class="t" style="left:695.5px;top:876.4px;font-size:10.2px;color:#222;font-weight:400;">0</div>
<div class="t" style="left:737.5px;top:876.4px;font-size:10.2px;color:#222;font-weight:400;">0</div>
<div class="t" style="left:779.0px;top:876.4px;font-size:10.2px;color:#222;font-weight:400;">0</div>
<div class="a" style="left:604.0px;top:903.5px;width:270.0px;height:1.0px;background:#e6e6e6;"></div>
<svg class="a" style="left:611.8px;top:913.1px" width="14" height="14" viewBox="0 0 14 14"><circle cx="7" cy="7" r="6.6" fill="#62b47c"/><path d="M3.9 7.2 L6.1 9.3 L10.2 5" stroke="#fff" stroke-width="1.7" fill="none" stroke-linecap="round" stroke-linejoin="round"/></svg>
<div class="t" style="left:633.0px;top:914.7px;font-size:10.2px;color:#222;font-weight:400;">URLs</div>
<div class="t" style="left:695.5px;top:914.7px;font-size:10.2px;color:#222;font-weight:400;">0</div>
<div class="t" style="left:737.5px;top:914.7px;font-size:10.2px;color:#222;font-weight:400;">0</div>
<div class="t" style="left:779.0px;top:914.7px;font-size:10.2px;color:#222;font-weight:400;">0</div>
<div class="p" style="left:891px;top:169px;width:287px;height:451px"><div class="ph"></div></div>
<div class="t f174" style="left:914.0px;top:189.8px;font-size:12.4px;color:#1e1e1e;font-weight:400;letter-spacing:-0.188px;-webkit-text-stroke:0.15px #1e1e1e">Volumes with most Disk Usage</div>
<div class="t" style="left:914.2px;top:245.5px;font-size:10.2px;color:#111;font-weight:700;">Device Name</div>
<div class="t" style="left:1022.6px;top:245.5px;font-size:10.2px;color:#111;font-weight:700;">Volume</div>
<div class="t" style="left:1089.8px;top:245.5px;font-size:10.2px;color:#111;font-weight:700;">Utilization(%)</div>
<div class="t" style="left:914.2px;top:276.9px;font-size:10.4px;color:#222;font-weight:400;">vCen</div>
<div class="a" style="left:938.4px;top:274.7px;width:55.6px;height:14.0px;background:#c3c3c3;"></div>
<div class="t" style="left:1022.6px;top:276.9px;font-size:10.4px;color:#222;font-weight:400;">C:\ Label...</div>
<div class="a" style="left:1089.2px;top:274.0px;width:40.3px;height:10.7px;background:#e8645f;"></div>
<div class="t" style="left:1155.0px;top:273.9px;font-size:10.4px;color:#222;font-weight:400;">96</div>
<div class="t" style="left:914.2px;top:307.7px;font-size:10.4px;color:#222;font-weight:400;">Opm</div>
<div class="a" style="left:938.4px;top:305.5px;width:55.0px;height:14.0px;background:#c3c3c3;"></div>
<div class="t" style="left:1022.6px;top:307.7px;font-size:10.4px;color:#222;font-weight:400;">C:</div>
<div class="a" style="left:1089.2px;top:304.8px;width:39.9px;height:10.7px;background:#e8645f;"></div>
<div class="t" style="left:1154.6px;top:304.7px;font-size:10.4px;color:#222;font-weight:400;">95</div>
<div class="t" style="left:914.2px;top:338.5px;font-size:10.4px;color:#222;font-weight:400;">Opm</div>
<div class="a" style="left:939.0px;top:336.3px;width:54.4px;height:14.0px;background:#c3c3c3;"></div>
<div class="t" style="left:1022.6px;top:338.5px;font-size:10.4px;color:#222;font-weight:400;">D:</div>
<div class="a" style="left:1089.2px;top:335.6px;width:30.2px;height:10.7px;background:#e6db72;"></div>
<div class="t" style="left:1144.9px;top:335.5px;font-size:10.4px;color:#222;font-weight:400;">72</div>
<div class="t" style="left:914.2px;top:369.3px;font-size:10.4px;color:#222;font-weight:400;">HP Pr</div>
<div class="a" style="left:939.0px;top:367.1px;width:53.4px;height:14.0px;background:#c3c3c3;"></div>
<div class="t" style="left:1022.6px;top:369.3px;font-size:10.4px;color:#222;font-weight:400;">C:</div>
<div class="a" style="left:1089.2px;top:366.4px;width:21.8px;height:10.7px;background:#68b984;"></div>
<div class="t" style="left:1136.5px;top:366.3px;font-size:10.4px;color:#222;font-weight:400;">52</div>
<div class="t" style="left:914.2px;top:400.1px;font-size:10.4px;color:#222;font-weight:400;">opm-</div>
<div class="a" style="left:939.0px;top:397.9px;width:52.2px;height:14.0px;background:#c3c3c3;"></div>
<div class="t" style="left:1022.6px;top:400.1px;font-size:10.4px;color:#222;font-weight:400;">C:</div>
<div class="a" style="left:1089.2px;top:397.2px;width:20.2px;height:10.7px;background:#68b984;"></div>
<div class="t" style="left:1134.9px;top:397.1px;font-size:10.4px;color:#222;font-weight:400;">48</div>
<div class="t" style="left:914.2px;top:430.9px;font-size:10.4px;color:#222;font-weight:400;">vijay-</div>
<div class="a" style="left:940.0px;top:428.7px;width:50.2px;height:14.0px;background:#c3c3c3;"></div>
<div class="t" style="left:1022.6px;top:430.9px;font-size:10.4px;color:#222;font-weight:400;">C:</div>
<div class="a" style="left:1089.2px;top:428.0px;width:18.1px;height:10.7px;background:#68b984;"></div>
<div class="t" style="left:1132.8px;top:427.9px;font-size:10.4px;color:#222;font-weight:400;">43</div>
<div class="t" style="left:914.2px;top:461.7px;font-size:10.4px;color:#222;font-weight:400;">OPM</div>
<div class="a" style="left:939.0px;top:459.5px;width:51.3px;height:14.0px;background:#c3c3c3;"></div>
<div class="t" style="left:1022.6px;top:461.7px;font-size:10.4px;color:#222;font-weight:400;">C:\ Label...</div>
<div class="a" style="left:1089.2px;top:458.8px;width:17.6px;height:10.7px;background:#68b984;"></div>
<div class="t" style="left:1132.3px;top:458.7px;font-size:10.4px;color:#222;font-weight:400;">42</div>
<div class="t" style="left:914.2px;top:492.5px;font-size:10.4px;color:#222;font-weight:400;">OPM</div>
<div class="a" style="left:939.5px;top:490.3px;width:51.4px;height:14.0px;background:#c3c3c3;"></div>
<div class="t" style="left:1022.6px;top:492.5px;font-size:10.4px;color:#222;font-weight:400;">C:</div>
<div class="a" style="left:1089.2px;top:489.6px;width:16.0px;height:10.7px;background:#68b984;"></div>
<div class="t" style="left:1130.7px;top:489.5px;font-size:10.4px;color:#222;font-weight:400;">38</div>
<div class="t" style="left:914.2px;top:523.3px;font-size:10.4px;color:#222;font-weight:400;">OPM</div>
<div class="a" style="left:940.3px;top:521.1px;width:50.6px;height:14.0px;background:#c3c3c3;"></div>
<div class="t" style="left:1022.6px;top:523.3px;font-size:10.4px;color:#222;font-weight:400;">C:\ Label...</div>
<div class="a" style="left:1089.2px;top:520.4px;width:15.5px;height:10.7px;background:#68b984;"></div>
<div class="t" style="left:1130.2px;top:520.3px;font-size:10.4px;color:#222;font-weight:400;">37</div>
<div class="t" style="left:914.2px;top:554.1px;font-size:10.4px;color:#222;font-weight:400;">opm-</div>
<div class="a" style="left:939.0px;top:551.9px;width:53.2px;height:14.0px;background:#c3c3c3;"></div>
<div class="t" style="left:1022.6px;top:554.1px;font-size:10.4px;color:#222;font-weight:400;">D:</div>
<div class="a" style="left:1089.2px;top:551.2px;width:14.7px;height:10.7px;background:#68b984;"></div>
<div class="t" style="left:1129.4px;top:551.1px;font-size:10.4px;color:#222;font-weight:400;">35</div>
<div class="p" style="left:891px;top:628px;width:287px;height:297px"><div class="ph"></div></div>
<div class="t f208" style="left:914.5px;top:648.8px;font-size:12.4px;color:#1e1e1e;font-weight:400;letter-spacing:-0.148px;-webkit-text-stroke:0.15px #1e1e1e">Devices by CPU Utilization</div>
<div class="t" style="left:914.0px;top:704.3px;font-size:10.2px;color:#111;font-weight:700;">Device Name</div>
<div class="t" style="left:1023.0px;top:704.3px;font-size:10.2px;color:#111;font-weight:700;">Min</div>
<div class="t" style="left:1063.8px;top:704.3px;font-size:10.2px;color:#111;font-weight:700;">...</div>
<div class="t" style="left:1089.4px;top:704.3px;font-size:10.2px;color:#111;font-weight:700;">Avg</div>
<div class="t" style="left:914.0px;top:734.8px;font-size:10.4px;color:#222;font-weight:400;">OPMc</div>
<div class="a" style="left:941.1px;top:734.0px;width:50.6px;height:13.4px;background:#c3c3c3;"></div>
<div class="t" style="left:1023.0px;top:734.8px;font-size:10.4px;color:#222;font-weight:400;">97</div>
<div class="t" style="left:1063.8px;top:734.8px;font-size:10.4px;color:#222;font-weight:400;">...</div>
<div class="a" style="left:1089.0px;top:732.8px;width:41.1px;height:10.2px;background:#e8645f;"></div>
<div class="t" style="left:1156.1px;top:732.5px;font-size:10.4px;color:#222;font-weight:400;">99</div>
<div class="t" style="left:914.0px;top:765.6px;font-size:10.4px;color:#222;font-weight:400;">HP Pr</div>
<div class="a" style="left:942.3px;top:764.9px;width:48.8px;height:13.4px;background:#c3c3c3;"></div>
<div class="t" style="left:1023.0px;top:765.6px;font-size:10.4px;color:#222;font-weight:400;">35</div>
<div class="t" style="left:1063.8px;top:765.6px;font-size:10.4px;color:#222;font-weight:400;">...</div>
<div class="a" style="left:1089.0px;top:763.7px;width:23.7px;height:10.2px;background:#68b984;"></div>
<div class="t" style="left:1138.7px;top:763.3px;font-size:10.4px;color:#222;font-weight:400;">57</div>
<div class="t" style="left:914.0px;top:796.5px;font-size:10.4px;color:#222;font-weight:400;">k16-D</div>
<div class="a" style="left:941.1px;top:795.7px;width:48.9px;height:13.4px;background:#c3c3c3;"></div>
<div class="t" style="left:1023.0px;top:796.5px;font-size:10.4px;color:#222;font-weight:400;">11</div>
<div class="t" style="left:1063.8px;top:796.5px;font-size:10.4px;color:#222;font-weight:400;">...</div>
<div class="a" style="left:1089.0px;top:794.5px;width:20.3px;height:10.2px;background:#68b984;"></div>
<div class="t" style="left:1135.3px;top:794.2px;font-size:10.4px;color:#222;font-weight:400;">49</div>
<div class="t" style="left:914.0px;top:827.3px;font-size:10.4px;color:#222;font-weight:400;">OPM-</div>
<div class="a" style="left:941.7px;top:826.6px;width:47.3px;height:13.4px;background:#c3c3c3;"></div>
<div class="t" style="left:1023.0px;top:827.3px;font-size:10.4px;color:#222;font-weight:400;">30</div>
<div class="t" style="left:1063.8px;top:827.3px;font-size:10.4px;color:#222;font-weight:400;">...</div>
<div class="a" style="left:1089.0px;top:825.4px;width:16.2px;height:10.2px;background:#68b984;"></div>
<div class="t" style="left:1131.2px;top:825.0px;font-size:10.4px;color:#222;font-weight:400;">39</div>
<div class="t" style="left:914.0px;top:858.2px;font-size:10.4px;color:#222;font-weight:400;">HP D</div>
<div class="a" style="left:940.2px;top:857.4px;width:48.8px;height:13.4px;background:#c3c3c3;"></div>
<div class="t" style="left:1023.0px;top:858.2px;font-size:10.4px;color:#222;font-weight:400;">4</div>
<div class="t" style="left:1063.8px;top:858.2px;font-size:10.4px;color:#222;font-weight:400;">...</div>
<div class="a" style="left:1089.0px;top:856.2px;width:12.0px;height:10.2px;background:#68b984;"></div>
<div class="t" style="left:1127.0px;top:855.9px;font-size:10.4px;color:#222;font-weight:400;">29</div>
<div class="t" style="left:914.0px;top:889.0px;font-size:10.4px;color:#222;font-weight:400;">opm-</div>
<div class="a" style="left:938.8px;top:888.2px;width:50.0px;height:13.4px;background:#c3c3c3;"></div>
<div class="t" style="left:1023.0px;top:889.0px;font-size:10.4px;color:#222;font-weight:400;">1</div>
<div class="t" style="left:1063.8px;top:889.0px;font-size:10.4px;color:#222;font-weight:400;">...</div>
<div class="a" style="left:1089.0px;top:887.1px;width:11.6px;height:10.2px;background:#68b984;"></div>
<div class="t" style="left:1126.6px;top:886.7px;font-size:10.4px;color:#222;font-weight:400;">28</div>
<div class="t" style="left:914.0px;top:919.9px;font-size:10.4px;color:#222;font-weight:400;">OPM</div>
<div class="a" style="left:941.7px;top:919.1px;width:46.5px;height:5.9px;background:#c3c3c3;"></div>
<div class="t" style="left:1023.0px;top:919.9px;font-size:10.4px;color:#222;font-weight:400;">4</div>
<div class="t" style="left:1063.8px;top:919.9px;font-size:10.4px;color:#222;font-weight:400;">...</div>
<div class="a" style="left:1089.0px;top:917.9px;width:7.9px;height:7.1px;background:#68b984;"></div>
<div class="t" style="left:1122.9px;top:917.6px;font-size:10.4px;color:#222;font-weight:400;">19</div>
<div class="p" style="left:1186px;top:169px;width:287px;height:756px"><div class="ph"></div></div>
<div class="t f241" style="left:1209.0px;top:189.8px;font-size:12.4px;color:#1e1e1e;font-weight:400;letter-spacing:-0.206px;-webkit-text-stroke:0.15px #1e1e1e">Recent Alarms</div>
<svg class="a" style="left:1186px;top:169px" width="287" height="300" viewBox="1186 169 287 300"><path d="M1268.49 422.11 A96 96 0 1 1 1328.90 443.50 L1328.90 417.00 A69.5 69.5 0 1 0 1285.16 401.51 Z" fill="#e8645f" stroke="#fff" stroke-width="0.8"/><path d="M1328.90 443.50 A96 96 0 0 1 1268.49 422.11 L1285.16 401.51 A69.5 69.5 0 0 0 1328.90 417.00 Z" fill="#e6db72" stroke="#fff" stroke-width="0.8"/><g fill="none" stroke="#111" stroke-width="2" stroke-linecap="round"><path d="M1319.4 325.1 L1338.6 325.1 L1336.3 319.6 L1336.3 311 C1336.3 306.5 1333.2 304 1329 304 C1324.8 304 1321.7 306.5 1321.7 311 L1321.7 319.6 Z" stroke-linejoin="miter" stroke-linecap="butt"/><path d="M1329 299.3 L1329 303.5"/><path d="M1315.9 298.4 L1319.3 302 M1342.4 298.4 L1339 302 M1310.9 306.9 L1315.8 308.2 M1347.2 306.9 L1342.3 308.2 M1310.9 316.6 L1315.7 315.3 M1347.2 316.6 L1342.3 315.3"/></g><path d="M1326.6 326 A2.4 2.4 0 0 0 1331.4 326 Z" fill="#111"/></svg>
<div class="t" style="left:1279px;width:100px;text-align:center;top:334.8px;font-size:26.5px;color:#111;letter-spacing:2px;text-indent:2px">10</div>
<div class="t" style="left:1279px;width:100px;text-align:center;top:366.2px;font-size:14.2px;color:#111">Alarm</div>
<div class="a" style="left:1193.0px;top:487.0px;width:270.0px;height:29.6px;background:#fafafa;"></div>
<div class="t" style="left:1199.0px;top:498.0px;font-size:10.6px;color:#333;font-weight:400;">Device Name</div>
<svg class="a" style="left:1264px;top:497px" width="8" height="10" viewBox="0 0 8 10"><path d="M1 4 L4 1 L7 4 Z M1 6 L4 9 L7 6 Z" fill="#d8d8d8"/></svg>
<div class="a" style="left:1193.0px;top:516.6px;width:270.0px;height:1.0px;background:#e3e3e3;"></div>
<div class="a" style="left:1201.0px;top:524.0px;width:2.2px;height:46.0px;background:#e8645f;"></div>
<div class="t f243" style="left:1208.4px;top:527.5px;font-size:10.6px;color:#111;font-weight:400;letter-spacing:-0.312px;;-webkit-text-stroke:0.35px #111;width:250px;overflow:hidden">ID=2004 Source=Microsoft-Windows-Resource-Exha...</div>
<div class="t" style="left:1208.4px;top:543.3px;font-size:10.2px;color:#666;font-weight:400;">Opm</div>
<div class="a" style="left:1232.0px;top:543.1px;width:61.8px;height:9.7px;background:#c3c3c3;"></div>
<div class="t f245" style="left:1208.4px;top:558.1px;font-size:10.4px;color:#444;font-weight:400;letter-spacing:-0.264px;;word-spacing:-0.4px">21 Feb 2019 04:57:02 PM IST</div>
<div class="a" style="left:1193.0px;top:578.6px;width:270.0px;height:1.0px;background:#e6e6e6;"></div>
<div class="a" style="left:1201.0px;top:586.5px;width:2.2px;height:46.0px;background:#e8645f;"></div>
<div class="t f246" style="left:1208.4px;top:589.9px;font-size:10.6px;color:#111;font-weight:400;letter-spacing:-0.201px;;-webkit-text-stroke:0.35px #111;width:250px;overflow:hidden">ID=4625 Source=Microsoft-Windows-Security-Auditi...</div>
<div class="t" style="left:1208.4px;top:605.8px;font-size:10.2px;color:#666;font-weight:400;">Opm</div>
<div class="a" style="left:1232.0px;top:605.6px;width:65.7px;height:9.7px;background:#c3c3c3;"></div>
<div class="t f248" style="left:1208.4px;top:620.5px;font-size:10.4px;color:#444;font-weight:400;letter-spacing:-0.264px;;word-spacing:-0.4px">21 Feb 2019 04:56:34 PM IST</div>
<div class="a" style="left:1193.0px;top:641.1px;width:270.0px;height:1.0px;background:#e6e6e6;"></div>
<div class="a" style="left:1201.0px;top:648.9px;width:2.2px;height:46.0px;background:#e8645f;"></div>
<div class="t f249" style="left:1208.4px;top:652.4px;font-size:10.6px;color:#111;font-weight:400;letter-spacing:-0.262px;;-webkit-text-stroke:0.35px #111;width:250px;overflow:hidden">ID=1014 Source=Microsoft-Windows-DNS-Client Typ...</div>
<div class="t" style="left:1208.4px;top:668.2px;font-size:10.2px;color:#666;font-weight:400;">Opm</div>
<div class="a" style="left:1231.4px;top:668.0px;width:64.5px;height:9.7px;background:#c3c3c3;"></div>
<div class="t f251" style="left:1208.4px;top:683.0px;font-size:10.4px;color:#444;font-weight:400;letter-spacing:-0.264px;;word-spacing:-0.4px">21 Feb 2019 04:55:58 PM IST</div>
<div class="a" style="left:1193.0px;top:703.5px;width:270.0px;height:1.0px;background:#e6e6e6;"></div>
<div class="a" style="left:1201.0px;top:711.4px;width:2.2px;height:46.0px;background:#e8645f;"></div>
<div class="t f252" style="left:1208.4px;top:714.8px;font-size:10.6px;color:#111;font-weight:400;letter-spacing:-0.444px;;-webkit-text-stroke:0.35px #111;width:250px;overflow:hidden">ID=6002 Source=MSExchange Mid-Tier Storage Type=...</div>
<div class="t" style="left:1208.4px;top:730.7px;font-size:10.2px;color:#666;font-weight:400;">Opm</div>
<div class="a" style="left:1230.9px;top:730.5px;width:66.0px;height:9.7px;background:#c3c3c3;"></div>
<div class="t f254" style="left:1208.4px;top:745.4px;font-size:10.4px;color:#444;font-weight:400;letter-spacing:-0.264px;;word-spacing:-0.4px">21 Feb 2019 04:52:49 PM IST</div>
<div class="a" style="left:1193.0px;top:766.0px;width:270.0px;height:1.0px;background:#e6e6e6;"></div>
<div class="a" style="left:1201.0px;top:773.8px;width:2.2px;height:46.0px;background:#e6db72;"></div>
<div class="t f255" style="left:1208.4px;top:777.3px;font-size:10.6px;color:#111;font-weight:400;letter-spacing:-0.513px;;-webkit-text-stroke:0.35px #111;width:250px;overflow:hidden">ID=700 Source=NTDS ISAM Type=3 Message=NTDS (...</div>
<div class="t" style="left:1208.4px;top:793.1px;font-size:10.2px;color:#666;font-weight:400;">Opm</div>
<div class="a" style="left:1230.9px;top:792.9px;width:67.7px;height:9.7px;background:#c3c3c3;"></div>
<div class="t f257" style="left:1208.4px;top:807.9px;font-size:10.4px;color:#444;font-weight:400;letter-spacing:-0.264px;;word-spacing:-0.4px">21 Feb 2019 04:43:34 PM IST</div>
<div class="a" style="left:1193.0px;top:828.4px;width:270.0px;height:1.0px;background:#e6e6e6;"></div>
<div class="a" style="left:1201.0px;top:836.2px;width:2.2px;height:46.0px;background:#e8645f;"></div>
<div class="t f258" style="left:1208.4px;top:839.7px;font-size:10.6px;color:#111;font-weight:400;letter-spacing:-0.393px;;-webkit-text-stroke:0.35px #111;width:250px;overflow:hidden">APM Plugin: Health is critical as the resource is not ava...</div>
<div class="t" style="left:1208.4px;top:855.6px;font-size:10.2px;color:#666;font-weight:400;">HP D</div>
<div class="a" style="left:1230.9px;top:855.4px;width:69.7px;height:9.7px;background:#c3c3c3;"></div>
<div class="t f260" style="left:1208.4px;top:870.3px;font-size:10.4px;color:#444;font-weight:400;letter-spacing:-0.235px;;word-spacing:-0.4px">21 Feb 2019 04:35:11 PM IST</div>
<div class="a" style="left:1193.0px;top:890.9px;width:270.0px;height:1.0px;background:#e6e6e6;"></div>
<div class="a" style="left:1201.0px;top:898.7px;width:2.2px;height:26.3px;background:#e8645f;"></div>
<div class="t f261" style="left:1208.4px;top:902.2px;font-size:10.6px;color:#111;font-weight:400;letter-spacing:-0.574px;;-webkit-text-stroke:0.35px #111;width:250px;overflow:hidden">ID=1010 Source=MSExchangeFastS</div>
<div class="t" style="left:1407.2px;top:902.2px;font-size:10.6px;color:#111;font-weight:400;letter-spacing:-0.4px;-webkit-text-stroke:0.35px #111">pe=2 Me</div>
<div class="t" style="left:1208.4px;top:918.0px;font-size:10.2px;color:#666;font-weight:400;">Opm</div>
<div class="a" style="left:1231.7px;top:917.8px;width:68.3px;height:7.2px;background:#c3c3c3;"></div>
<div class="a" style="left:1364.3px;top:891.1px;width:42.6px;height:33.9px;background:#2a2a2a;"></div>
<div class="a" style="left:1364.3px;top:891.1px;width:42.6px;height:4.0px;background:#050505;"></div>
<div class="t" style="left:1364.3px;width:42.6px;text-align:center;top:898.2px;font-size:15.5px;color:#7e7e7e;font-weight:700">286</div>
<div class="t" style="left:1364.3px;width:42.6px;text-align:center;top:913.6px;font-size:9px;color:#8a8a8a">Alarms</div>
<div class="a" style="left:1421.9px;top:891.1px;width:42.6px;height:33.9px;background:#5aa875;"></div>
<div class="a" style="left:1421.9px;top:891.1px;width:42.6px;height:4.0px;background:#69b985;"></div>
<svg class="a" style="left:1422px;top:891px" width="42" height="34" viewBox="1422 891 42 34">
<g fill="none" stroke="#d6ecdc" stroke-width="1">
<path d="M1439 905.2 v-3.3 a1.6 1.6 0 0 1 1.6 -1.6 h11.8 a1.6 1.6 0 0 1 1.6 1.6 v8.6 a1.6 1.6 0 0 1 -1.6 1.6 h-2.2"/>
<path d="M1433.5 907.4 a1.7 1.7 0 0 1 1.7 -1.7 h13.4 a1.7 1.7 0 0 1 1.7 1.7 v7.8 a1.7 1.7 0 0 1 -1.7 1.7 h-8.6 l-2.3 3.6 v-3.6 h-2.5 a1.7 1.7 0 0 1 -1.7 -1.7 z"/>
</g>
<g fill="#d6ecdc"><rect x="1437.2" y="908.8" width="4.5" height="1"/><rect x="1437.2" y="910.9" width="9.5" height="1"/><rect x="1437.2" y="912.9" width="9.5" height="1"/></g>
</svg>
<div class="a" style="left:0.0px;top:925.0px;width:1480.0px;height:62.0px;background:#fff;"></div>
</body></html>
